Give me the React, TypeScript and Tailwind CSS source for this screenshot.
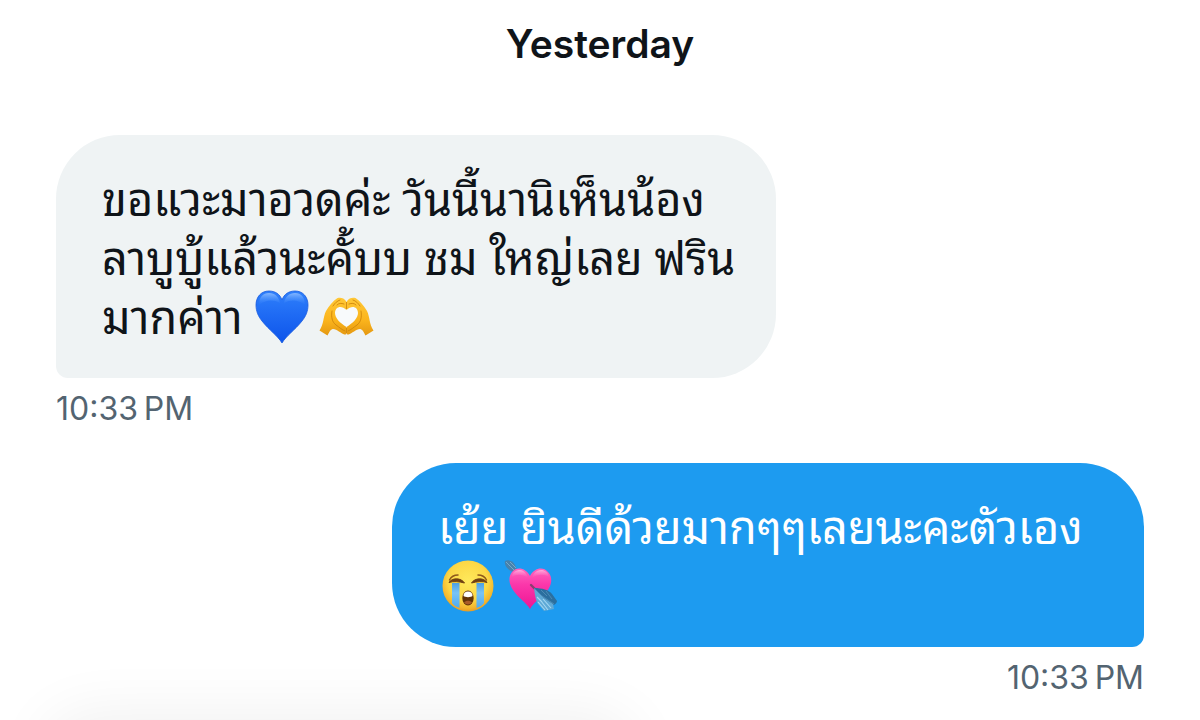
import type { ReactNode } from 'react';

function BlueHeart() {
  return (
    <svg role="img" aria-label="blue heart" viewBox="0 0 54 54" className="size-[54px] shrink-0">
      <defs>
        <linearGradient id="bh-fill" x1="0" y1="0" x2="0" y2="1">
          <stop offset="0" stopColor="#2f80fb" />
          <stop offset="0.45" stopColor="#1f6bf4" />
          <stop offset="1" stopColor="#0d54ea" />
        </linearGradient>
        <linearGradient id="bh-shine" x1="0" y1="0" x2="0" y2="1">
          <stop offset="0" stopColor="#8dbcff" stopOpacity="0.9" />
          <stop offset="1" stopColor="#3d8bff" stopOpacity="0" />
        </linearGradient>
      </defs>
      <path d="M27 53C23 46 14 40 7 31C3 26 1 21 1 15C1 7 6 1 14 1C20 1 25 4 27 10C29 4 34 1 40 1C48 1 53 7 53 15C53 21 51 26 47 31C40 40 31 46 27 53Z" fill="url(#bh-fill)" stroke="#1559df" strokeWidth="0.8" />
      <path d="M4 15C4 7 8 3 14 3C20 3 24 7 25 13C18 9 10 10 4 15ZM50 15C50 7 46 3 40 3C34 3 30 7 29 13C36 9 44 10 50 15Z" fill="url(#bh-shine)" />
    </svg>
  );
}

function HeartHands() {
  return (
    <svg role="img" aria-label="heart hands" viewBox="0 0 55 40" className="h-10 w-[55px] shrink-0">
      <defs>
        <linearGradient id="hh-fill" x1="0" y1="0" x2="0" y2="1">
          <stop offset="0" stopColor="#ffc837" />
          <stop offset="0.6" stopColor="#fbb41c" />
          <stop offset="1" stopColor="#e49812" />
        </linearGradient>
        <g id="hh-hand">
          <path d="M27.500 5C26 1.500 22 0 18.500 1C14 4 10 9 7 14C4 20 5 27 0.500 33.500L8.500 38.500C10 36 11 32.500 14 32C18 32 22 36.500 25.500 37.500C27 37.500 27.500 37 27.500 36V30C21 26 16 21 16 16C16 9 23 8 27.500 13Z" fill="url(#hh-fill)" />
          <path d="M13 14C12 20 13 25 17 28C20 30 23 33 26 34M21 3C18 4 16 6 14 9M25 7C22 6 20 6 18 8" fill="none" stroke="#cf860b" strokeWidth="0.9" strokeLinecap="round" />
        </g>
      </defs>
      <path d="M27.500 13C23 8 16 9 16 16C16 21 21 26 27.500 30C34 26 39 21 39 16C39 9 32 8 27.500 13Z" fill="#f8fafc" />
      <use href="#hh-hand" />
      <use href="#hh-hand" transform="translate(55 0) scale(-1 1)" />
      <path d="M27.500 5V12M27.500 31V36" stroke="#cf860b" strokeWidth="0.9" />
    </svg>
  );
}

function CryingFace() {
  return (
    <svg role="img" aria-label="loudly crying face" viewBox="0 0 52 52" className="size-[52px] shrink-0">
      <defs>
        <radialGradient id="cf-face" cx="0.5" cy="0.4" r="0.6">
          <stop offset="0" stopColor="#ffe95b" />
          <stop offset="0.65" stopColor="#fcd745" />
          <stop offset="0.9" stopColor="#f2b32c" />
          <stop offset="1" stopColor="#e79b25" />
        </radialGradient>
        <linearGradient id="cf-tear" x1="0" y1="0" x2="0" y2="1">
          <stop offset="0" stopColor="#4c9fe4" />
          <stop offset="0.4" stopColor="#79c3f5" />
          <stop offset="1" stopColor="#4daaf1" />
        </linearGradient>
      </defs>
      <circle cx="26" cy="26" r="25.5" fill="url(#cf-face)" />
      <path d="M10 23H17.500V48C14 47 11.500 45 10 43ZM34.500 23H42V43C40.500 45 38 47 34.500 48Z" fill="url(#cf-tear)" />
      <path d="M7 22.500C10 17.500 19 17.500 22.500 23C17 21.500 11 21 7 22.500ZM29.500 23C33 17.500 42 17.500 45 22.500C41 21 35 21.500 29.500 23Z" fill="#704012" stroke="#704012" strokeWidth="1" strokeLinejoin="round" />
      <path d="M7.500 20C9 17 12 15 16 15M36 15C40 15 43 17 44.500 20" fill="none" stroke="#8f591b" strokeWidth="1.5" strokeLinecap="round" />
      <ellipse cx="26" cy="38" rx="5.7" ry="7.5" fill="#633407" />
      <path d="M21.500 36C21.500 33 23 31.500 26 31.500C29 31.500 30.500 33 30.500 36C29 37.500 23 37.500 21.500 36Z" fill="#fff" />
      <path d="M22 42.500C24 40 28 40 30 42.500C28 45 24 45 22 42.500Z" fill="#a85a28" />
    </svg>
  );
}

function ArrowHeart() {
  return (
    <svg role="img" aria-label="heart with arrow" viewBox="0 0 54 54" className="size-[54px] shrink-0">
      <defs>
        <linearGradient id="ah-fill" x1="0" y1="0" x2="0" y2="1">
          <stop offset="0" stopColor="#ff65bf" />
          <stop offset="0.4" stopColor="#fb37aa" />
          <stop offset="1" stopColor="#ee1594" />
        </linearGradient>
        <linearGradient id="ah-shine" x1="0" y1="0" x2="0" y2="1">
          <stop offset="0" stopColor="#ffb5e1" stopOpacity="0.9" />
          <stop offset="1" stopColor="#ff68bd" stopOpacity="0" />
        </linearGradient>
      </defs>
      <path d="M1 2C4 0 9 2 11 6L13 11L9 13C4 11 0 7 1 2Z" fill="#4682ad" />
      <path d="M2 3L11 12M6 3L12 9" stroke="#78a9c9" strokeWidth="1" />
      <path d="M26 50C23 44 14 39 9 31C5 25 4 18 8 13C13 7 22 9 26 17C30 9 39 7 44 13C49 18 48 26 43 32C37 39 29 44 26 50Z" fill="url(#ah-fill)" />
      <path d="M8 18C8 13 12 11 16 11C20 11 23 15 24 19C18 15 13 15 8 18ZM45 18C44 13 41 11 37 11C32 11 29 15 28 19C34 15 40 15 45 18Z" fill="url(#ah-shine)" />
      <path d="M27 26L38 37" stroke="#8a3d70" strokeWidth="2.4" strokeLinecap="round" />
      <path d="M30 29C38 29 45 31 48 35L53 42C53 44 51 45 50 46L40 40Z" fill="#2b6f9f" />
      <path d="M30 29C31 37 32 42 34 45L40 52L50 50L49 45L40 39Z" fill="#5fa9d6" />
      <path d="M33 38L38 43M34 43L41 51M37 42L44 51M39 40L47 49" stroke="#a5d8f3" strokeWidth="1.1" />
      <path d="M37 31L43 37M42 32L48 40M38 37L50 45" stroke="#5592b9" strokeWidth="0.8" />
    </svg>
  );
}

type MessageProps = { time: string; outgoing?: boolean; children: ReactNode };

function Message({ time, outgoing = false, children }: MessageProps) {
  return (
    <article className={outgoing ? 'flex flex-col items-end' : 'flex flex-col items-start'}>
      <div
        lang="th"
        className={
          outgoing
            ? 'w-full max-w-[752px] rounded-[64px] rounded-br-xl bg-[#1d9bf0] px-[46px] pt-8 pb-[34px] text-white'
            : 'w-full max-w-[720px] rounded-[64px] rounded-bl-xl bg-[#eff3f4] px-[46px] pt-8 pb-[34px] text-[#0f1419]'
        }
      >
        {children}
      </div>
      <time className="mt-2 text-[32px] leading-[46px] text-[#536471]">{time}</time>
    </article>
  );
}

function Line({ children }: { children: ReactNode }) {
  return (
    <p className="flex h-[59px] items-center gap-2 whitespace-pre font-['Noto_Sans_Thai_Looped','Loma',sans-serif] text-[45px] leading-[59px]">
      {children}
    </p>
  );
}

function Emojis({ children }: { children: ReactNode }) {
  return <span className="flex items-center gap-2.5 pt-1 pl-1">{children}</span>;
}

export default function App() {
  return (
    <main className="relative h-screen overflow-hidden bg-white font-['Inter',sans-serif]">
      <h1 className="pt-5 text-center text-[39px] font-semibold leading-[48px] text-[#0f1419]">Yesterday</h1>
      <section className="mt-[67px] flex flex-col gap-[31px] px-14">
        <Message time={'10:33\u202fPM'}>
          <Line>ขอแวะมาอวดค่ะ วันนี้นานิเห็นน้อง</Line>
          <Line>ลาบูบู้แล้วนะคั้บบ ชม ใหญ่เลย ฟริน</Line>
          <Line>
            มากค่าา
            <Emojis>
              <BlueHeart />
              <HeartHands />
            </Emojis>
          </Line>
        </Message>
        <Message time={'10:33\u202fPM'} outgoing>
          <Line>เย้ย ยินดีด้วยมากๆๆเลยนะคะตัวเอง</Line>
          <Line>
            <Emojis>
              <CryingFace />
              <ArrowHeart />
            </Emojis>
          </Line>
        </Message>
      </section>
      <div className="absolute top-full left-[50px] h-20 w-[580px] rounded-full shadow-[0_0_60px_8px_rgba(0,0,0,0.06)]" />
    </main>
  );
}
